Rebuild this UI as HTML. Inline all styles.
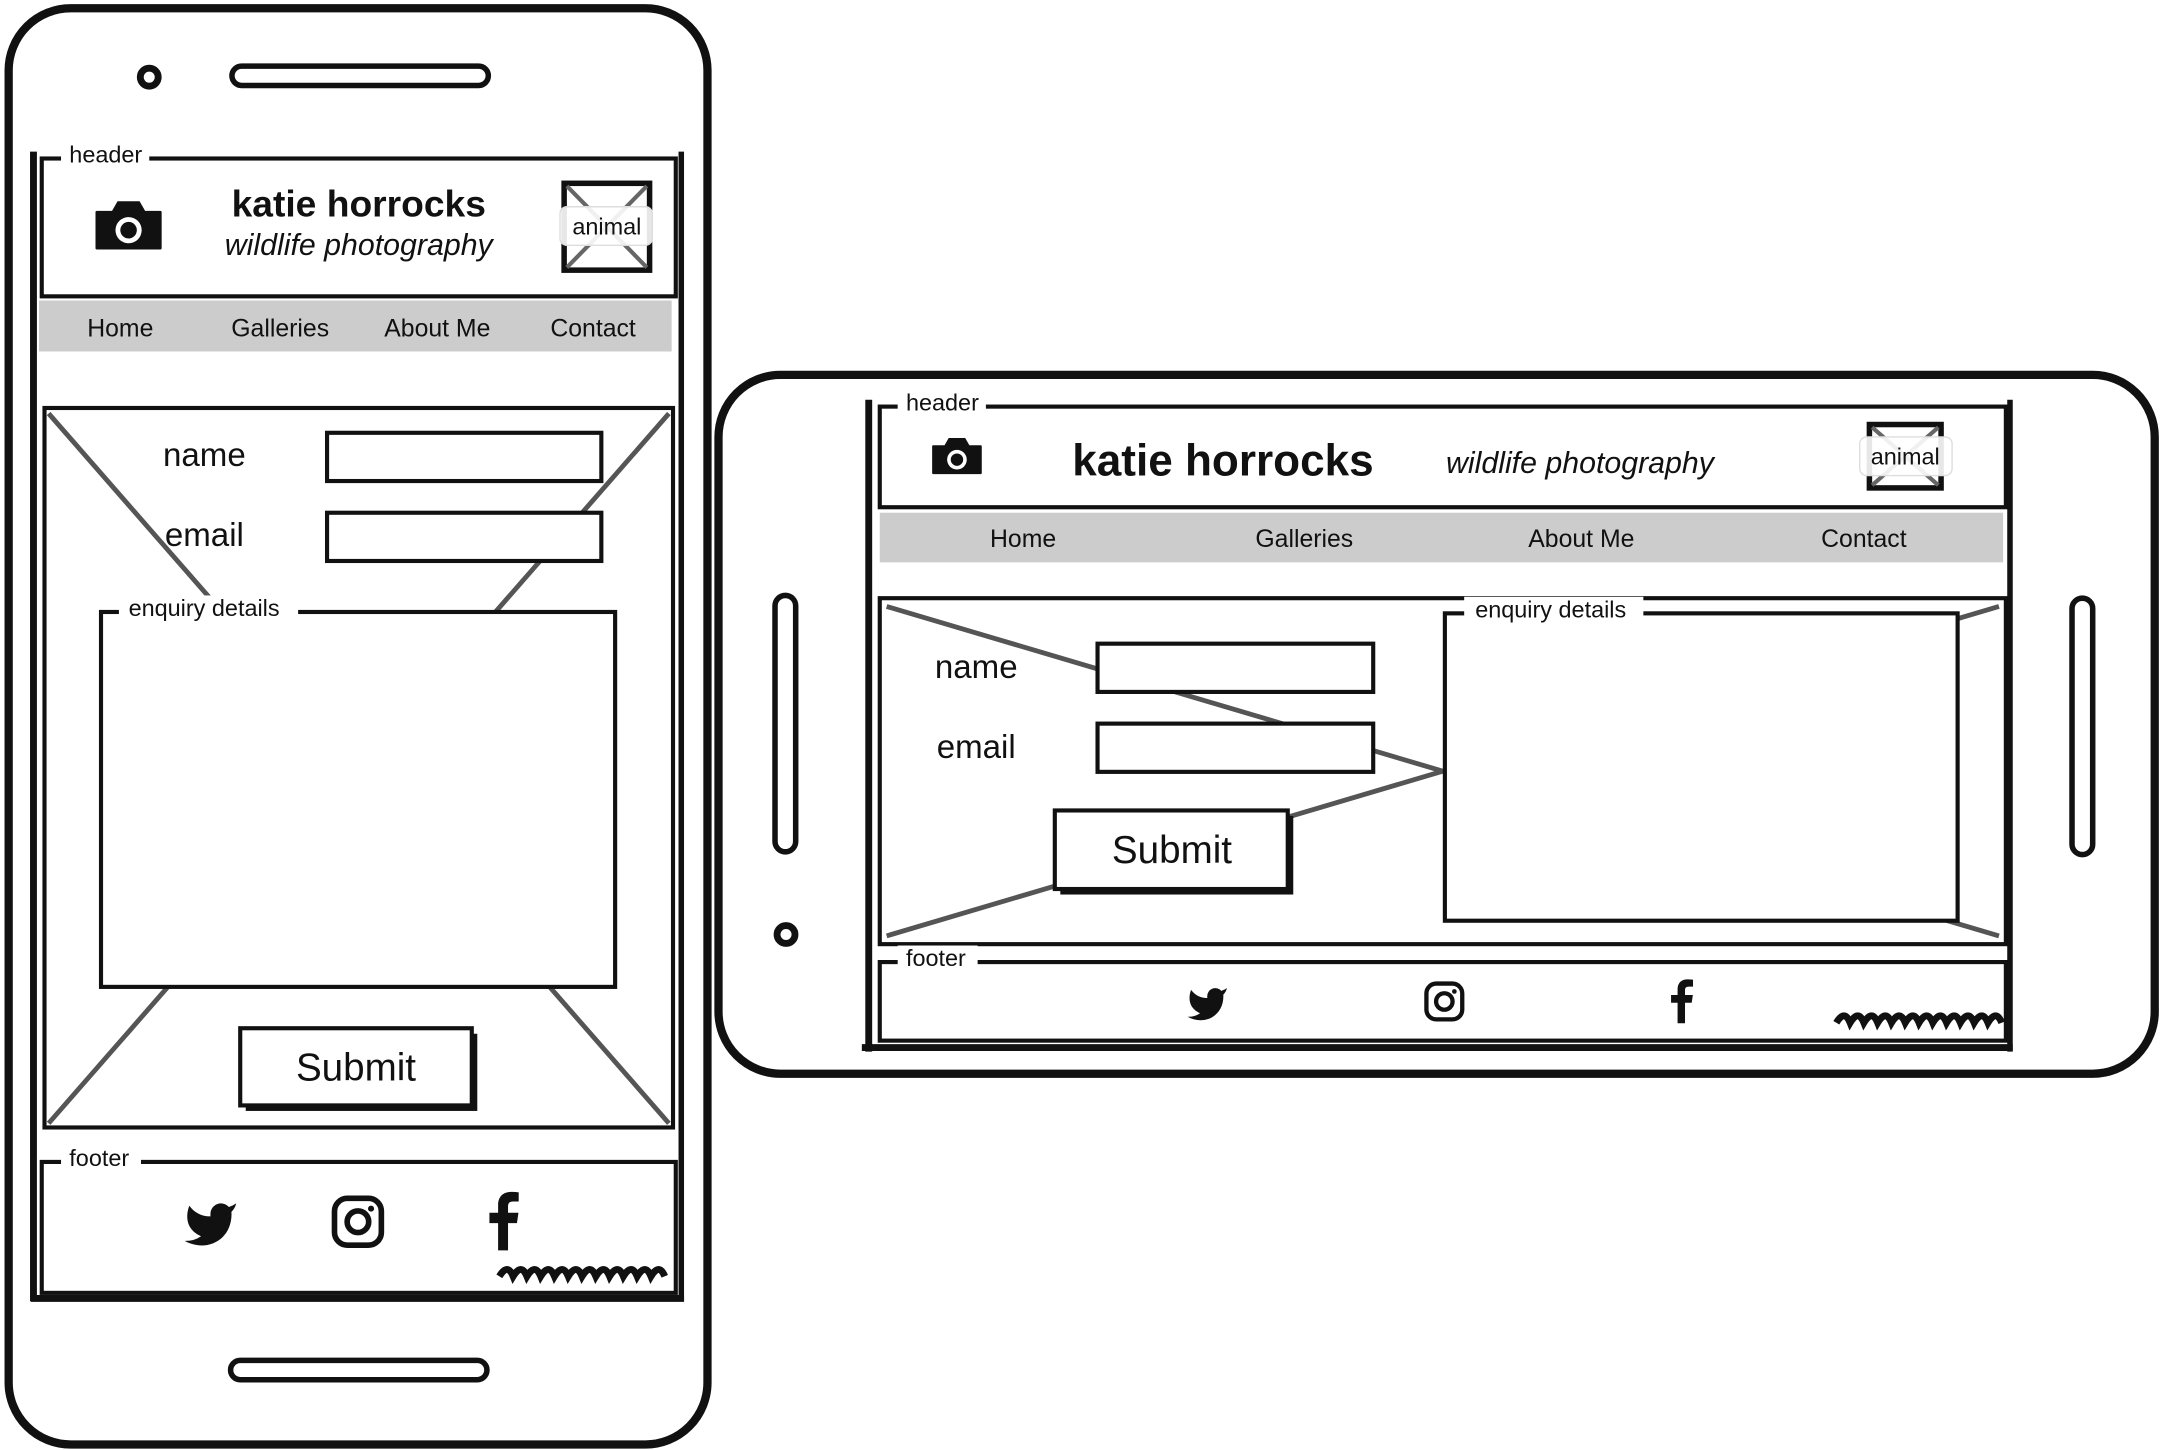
<!DOCTYPE html>
<html><head><meta charset="utf-8"><style>
html,body{margin:0;padding:0;background:#fff;}
svg{display:block;}
text{font-family:"Liberation Sans",sans-serif;fill:#111;}
</style></head><body>
<svg width="2162" height="1450" viewBox="0 0 1568 1052" xmlns="http://www.w3.org/2000/svg">
<defs>
<g id="tw"><path d="M23 3a10.9 10.9 0 0 1-3.14 1.53 4.48 4.48 0 0 0-7.860 3v1A10.66 10.66 0 0 1 3 4s-4 9 5 13a11.64 11.64 0 0 1-7 2c9 5 20 0 20-11.5a4.5 4.5 0 0 0-.08-.83A7.72 7.72 0 0 0 23 3z" fill="#111"/></g>
<g id="ig"><rect x="2" y="2" width="20" height="20" rx="5.5" fill="none" stroke="#111" stroke-width="2.4"/><circle cx="12" cy="12" r="4.6" fill="none" stroke="#111" stroke-width="2.4"/><circle cx="17.6" cy="6.4" r="1.3" fill="#111"/></g>
<g id="fb"><path d="M13.5 24V13h3.6l.6-4.2h-4.2V6.3c0-1.2.4-2 2.1-2h2.2V.6C17.4.5 16.1.4 14.7.4c-3.1 0-5.2 1.9-5.2 5.3v3.1H6V13h3.5v11z" fill="#111"/></g>
<g id="cam"><path d="M-23 -12h11l4-7h16l4 7h11a1 1 0 0 1 1 1v26a1 1 0 0 1-1 1h-46a1 1 0 0 1-1-1v-26a1 1 0 0 1 1-1z" fill="#111"/><circle cx="0" cy="2" r="9.5" fill="#fff"/><circle cx="0" cy="2" r="6" fill="#111"/></g>
</defs>

<!-- LEFT PHONE -->
<rect x="6" y="6" width="507" height="1042" rx="45" fill="#fff" stroke="#111" stroke-width="6"/>
<circle cx="108" cy="56" r="6.5" fill="none" stroke="#111" stroke-width="5"/>
<rect x="168" y="48" width="186" height="14" rx="7" fill="none" stroke="#111" stroke-width="4"/>
<rect x="167" y="987" width="186" height="14" rx="7" fill="none" stroke="#111" stroke-width="4"/>
<line x1="24" y1="110" x2="24" y2="944" stroke="#111" stroke-width="5"/>
<line x1="494" y1="110" x2="494" y2="944" stroke="#111" stroke-width="4"/>
<line x1="22" y1="942" x2="496" y2="942" stroke="#111" stroke-width="5"/>
<rect x="30" y="115" width="460" height="100" fill="#fff" stroke="#111" stroke-width="3"/>
<rect x="44" y="103" width="64" height="20" fill="#fff"/>
<text x="50" y="118" font-size="17">header</text>
<use href="#cam" transform="translate(93,165)"/>
<text x="260" y="157" font-size="27" font-weight="bold" text-anchor="middle">katie horrocks</text>
<text x="260" y="185" font-size="22" font-style="italic" text-anchor="middle">wildlife photography</text>
<rect x="409" y="133" width="62" height="63" fill="#fff" stroke="#111" stroke-width="4"/>
<line x1="411" y1="135" x2="469" y2="194" stroke="#666" stroke-width="3"/>
<line x1="469" y1="135" x2="411" y2="194" stroke="#666" stroke-width="3"/>
<rect x="406" y="150" width="67" height="28" rx="5" fill="#fff" fill-opacity="0.9" stroke="#ddd"/>
<text x="440" y="170" font-size="17" text-anchor="middle">animal</text>
<rect x="28" y="218" width="459" height="37" fill="#ccc"/>
<text x="87" y="244" font-size="18" text-anchor="middle">Home</text>
<text x="203" y="244" font-size="18" text-anchor="middle">Galleries</text>
<text x="317" y="244" font-size="18" text-anchor="middle">About Me</text>
<text x="430" y="244" font-size="18" text-anchor="middle">Contact</text>
<rect x="32" y="296" width="456" height="522" fill="#fff" stroke="#111" stroke-width="3"/>
<line x1="35" y1="300" x2="485" y2="815" stroke="#555" stroke-width="3.5"/>
<line x1="485" y1="300" x2="35" y2="815" stroke="#555" stroke-width="3.5"/>
<rect x="130" y="680" width="260" height="30" fill="#fff"/>
<text x="148" y="338" font-size="24" text-anchor="middle">name</text>
<rect x="237" y="314" width="199" height="35" fill="#fff" stroke="#111" stroke-width="3"/>
<text x="148" y="396" font-size="24" text-anchor="middle">email</text>
<rect x="237" y="372" width="199" height="35" fill="#fff" stroke="#111" stroke-width="3"/>
<rect x="73" y="444" width="373" height="272" fill="#fff" stroke="#111" stroke-width="3"/>
<rect x="86" y="432" width="130" height="20" fill="#fff"/>
<text x="93" y="447" font-size="17">enquiry details</text>
<rect x="178" y="750" width="168" height="56" fill="#111"/>
<rect x="174" y="746" width="168" height="56" fill="#fff" stroke="#111" stroke-width="3"/>
<text x="258" y="784" font-size="28" text-anchor="middle">Submit</text>
<rect x="30" y="843" width="460" height="95" fill="#fff" stroke="#111" stroke-width="3"/>
<rect x="44" y="830" width="58" height="20" fill="#fff"/>
<text x="50" y="846" font-size="17">footer</text>
<use href="#tw" transform="translate(132,868) scale(1.7)"/>
<use href="#ig" transform="translate(239,866) scale(1.7)"/>
<use href="#fb" transform="translate(344,864) scale(1.8)"/>
<path d="M362 926 q6-10 10 0 q6-10 10 0 q6-10 10 0 q6-10 10 0 q6-10 10 0 q6-10 10 0 q6-10 10 0 q6-10 10 0 q6-10 10 0 q6-10 10 0 q6-10 10 0 q6-10 10 0" fill="none" stroke="#111" stroke-width="5"/>

<!-- RIGHT PHONE -->
<rect x="521" y="272" width="1042" height="507" rx="45" fill="#fff" stroke="#111" stroke-width="6"/>
<rect x="562" y="432" width="15" height="186" rx="7.5" fill="none" stroke="#111" stroke-width="4"/>
<rect x="1503" y="434" width="15" height="186" rx="7.5" fill="none" stroke="#111" stroke-width="4"/>
<circle cx="570" cy="678" r="6.5" fill="none" stroke="#111" stroke-width="5"/>
<line x1="630" y1="290" x2="630" y2="763" stroke="#111" stroke-width="5"/>
<line x1="1458" y1="290" x2="1458" y2="763" stroke="#111" stroke-width="4"/>
<line x1="625" y1="760" x2="1460" y2="760" stroke="#111" stroke-width="5"/>
<rect x="638" y="295" width="817" height="73" fill="#fff" stroke="#111" stroke-width="3"/>
<rect x="651" y="283" width="64" height="20" fill="#fff"/>
<text x="657" y="298" font-size="17">header</text>
<use href="#cam" transform="translate(694,332) scale(0.75)"/>
<text x="887" y="345" font-size="32" font-weight="bold" text-anchor="middle">katie horrocks</text>
<text x="1146" y="343" font-size="22" font-style="italic" text-anchor="middle">wildlife photography</text>
<rect x="1356" y="308" width="52" height="46" fill="#fff" stroke="#111" stroke-width="4"/>
<line x1="1358" y1="310" x2="1406" y2="352" stroke="#666" stroke-width="3"/>
<line x1="1406" y1="310" x2="1358" y2="352" stroke="#666" stroke-width="3"/>
<rect x="1349" y="317" width="67" height="28" rx="5" fill="#fff" fill-opacity="0.9" stroke="#ddd"/>
<text x="1382" y="337" font-size="17" text-anchor="middle">animal</text>
<rect x="638" y="372" width="815" height="36" fill="#ccc"/>
<text x="742" y="397" font-size="18" text-anchor="middle">Home</text>
<text x="946" y="397" font-size="18" text-anchor="middle">Galleries</text>
<text x="1147" y="397" font-size="18" text-anchor="middle">About Me</text>
<text x="1352" y="397" font-size="18" text-anchor="middle">Contact</text>
<rect x="638" y="434" width="817" height="251" fill="#fff" stroke="#111" stroke-width="3"/>
<line x1="643" y1="440" x2="1450" y2="679" stroke="#555" stroke-width="3.5"/>
<line x1="643" y1="679" x2="1450" y2="440" stroke="#555" stroke-width="3.5"/>
<text x="708" y="492" font-size="24" text-anchor="middle">name</text>
<rect x="796" y="467" width="200" height="35" fill="#fff" stroke="#111" stroke-width="3"/>
<text x="708" y="550" font-size="24" text-anchor="middle">email</text>
<rect x="796" y="525" width="200" height="35" fill="#fff" stroke="#111" stroke-width="3"/>
<rect x="769" y="592" width="169" height="57" fill="#111"/>
<rect x="765" y="588" width="169" height="57" fill="#fff" stroke="#111" stroke-width="3"/>
<text x="850" y="626" font-size="28" text-anchor="middle">Submit</text>
<rect x="1046" y="436" width="376" height="10" fill="#fff"/>
<rect x="1048" y="445" width="372" height="223" fill="#fff" stroke="#111" stroke-width="3"/>
<rect x="1062" y="433" width="130" height="20" fill="#fff"/>
<text x="1070" y="448" font-size="17">enquiry details</text>
<rect x="638" y="698" width="817" height="57" fill="#fff" stroke="#111" stroke-width="3"/>
<rect x="651" y="686" width="58" height="20" fill="#fff"/>
<text x="657" y="701" font-size="17">footer</text>
<use href="#tw" transform="translate(860,713) scale(1.3)"/>
<use href="#ig" transform="translate(1032,711) scale(1.3)"/>
<use href="#fb" transform="translate(1204,710) scale(1.35)"/>
<path d="M1332 742 q6-10 10 0 q6-10 10 0 q6-10 10 0 q6-10 10 0 q6-10 10 0 q6-10 10 0 q6-10 10 0 q6-10 10 0 q6-10 10 0 q6-10 10 0 q6-10 10 0 q6-10 10 0" fill="none" stroke="#111" stroke-width="5"/>
</svg>
</body></html>
